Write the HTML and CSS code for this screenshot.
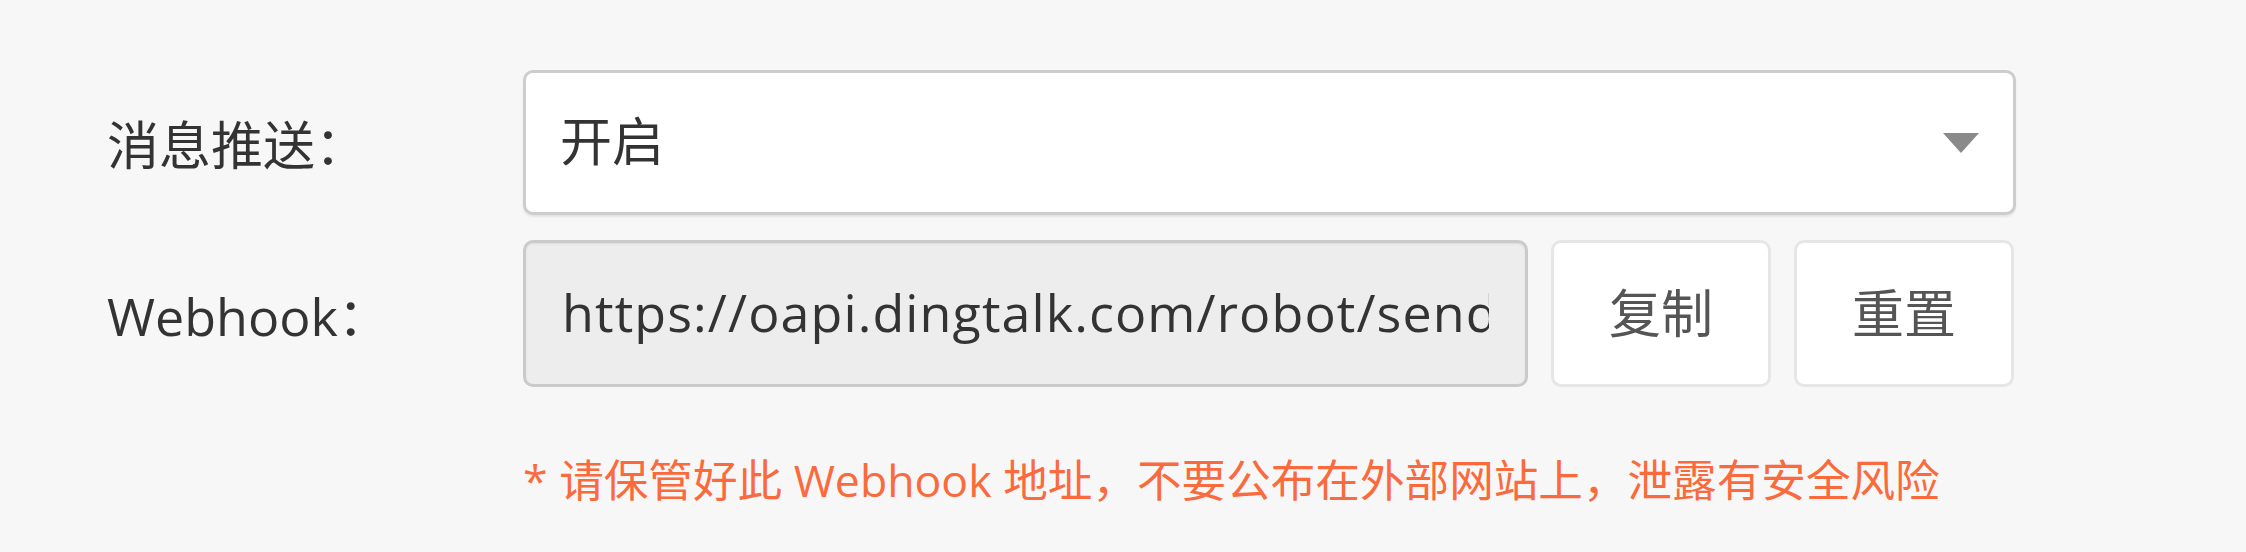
FILE: index.html
```html
<!DOCTYPE html>
<html lang="zh-CN">
<head>
<meta charset="utf-8">
<title>消息推送设置</title>
<link rel="stylesheet" href="styles.css">
</head>
<body>
<div class="form">
  <div class="row">
    <label class="label">消息推送：</label>
    <div class="control">
      <div class="select">
        <span class="select-value">开启</span>
        <span class="caret"></span>
      </div>
    </div>
  </div>
  <div class="row">
    <label class="label">Webhook：</label>
    <div class="control group">
      <input class="input" type="text" readonly value="https://oapi.dingtalk.com/robot/send?access_token=xxxxxxxxxxxxxxxxxxxxxxxx">
      <button class="btn" type="button">复制</button>
      <button class="btn" type="button">重置</button>
    </div>
  </div>
  <div class="row hint-row">
    <span></span>
    <p class="hint">* 请保管好此 Webhook 地址，不要公布在外部网站上，泄露有安全风险</p>
  </div>
</div>
</body>
</html>
```
FILE: styles.css
```css
html, body {
  margin: 0;
  padding: 0;
  background: #f7f7f7;
}

body {
  font-family: "Open Sans", "Noto Sans CJK SC", sans-serif;
  color: #333;
  font-size: 52px;
}

.form {
  padding: 70px 0 0 107px;
  display: flex;
  flex-direction: column;
  gap: 25px;
}

.row {
  display: grid;
  grid-template-columns: 416px 1493px;
  align-items: center;
}

.label {
  color: #333;
  white-space: nowrap;
}

.select {
  box-sizing: border-box;
  height: 145px;
  background: #fff;
  border: 3px solid #cdcdcd;
  border-radius: 10px;
  box-shadow: 0 2px 2px rgba(0, 0, 0, 0.08);
  display: flex;
  align-items: center;
  justify-content: space-between;
  padding: 0 34px 8px 34px;
}

.select-value {
  color: #333;
}

.caret {
  width: 0;
  height: 0;
  border-left: 18px solid transparent;
  border-right: 18px solid transparent;
  border-top: 20px solid #8a8a8a;
  margin-top: 8px;
}

.group {
  display: flex;
  align-items: stretch;
  height: 147px;
}

.input {
  box-sizing: border-box;
  width: 1005px;
  height: 147px;
  margin: 0;
  padding: 0 36px 4px 36px;
  font: inherit;
  letter-spacing: 1.1px;
  color: #333;
  background: #ededed;
  border: 3px solid #cacaca;
  border-radius: 10px;
  box-shadow: inset 0 1px 2px rgba(0, 0, 0, 0.08);
  outline: none;
}

.btn {
  box-sizing: border-box;
  width: 220px;
  height: 147px;
  margin: 0 0 0 23px;
  padding: 0 0 6px 0;
  font: inherit;
  color: #555;
  background: #fff;
  border: 3px solid #e6e6e6;
  border-radius: 10px;
}

.hint-row {
  margin-top: 33px;
}

.hint {
  margin: 0;
  font-size: 44.6px;
  color: #fa6a3c;
  white-space: nowrap;
}
```
